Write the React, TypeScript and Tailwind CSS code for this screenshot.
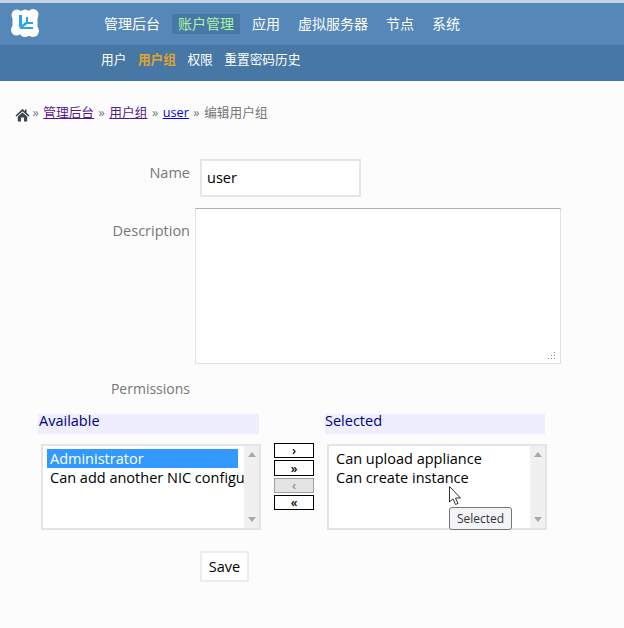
const cjk = "font-['Open_Sans','Noto_Sans_CJK_SC',sans-serif]";

function Logo() {
  return (
    <svg width="28" height="28" viewBox="0 0 28 28">
      <g fill="#ffffff">
        <circle cx="6" cy="6" r="5.5" />
        <circle cx="22" cy="5.5" r="5.5" />
        <circle cx="5.5" cy="21" r="5.5" />
        <circle cx="22" cy="22" r="6" />
        <circle cx="14" cy="6" r="5.5" />
        <circle cx="14" cy="22.5" r="5.5" />
        <rect x="1.5" y="5" width="25" height="18" />
      </g>
      <g fill="#2aa6e8">
        <rect x="8" y="6" width="3" height="12" />
        <rect x="15" y="8" width="2" height="7" />
        <rect x="15" y="13" width="7" height="2" />
        <rect x="9" y="18" width="13" height="2" />
      </g>
      <path d="M9 19L16 13.5" stroke="#2aa6e8" strokeWidth="2.5" />
    </svg>
  );
}

function Home() {
  return (
    <svg width="15" height="14" viewBox="0 0 15 14">
      <path d="M7.5 1L0.5 7.5L1.5 8.5L7.5 3.2L13.5 8.5L14.5 7.5L11.5 4.7V1.5H10V3.3z" fill="#333c42" />
      <path d="M2.8 8.6L7.5 4.5L12.2 8.6V13.5H9V9.5H6V13.5H2.8z" fill="#3d464c" />
    </svg>
  );
}

function Arrow({ up }: { up?: boolean }) {
  return (
    <svg width="8" height="5" viewBox="0 0 8 5">
      <path d={up ? "M4 0L8 5H0z" : "M0 0H8L4 5z"} fill="#a8a8a8" />
    </svg>
  );
}

function ListBox({ items, selected }: { items: string[]; selected?: string }) {
  return (
    <div className="flex h-[86px] w-[220px] border-2 border-[#e4e4e4] bg-white">
      <div className="min-w-0 flex-1 overflow-hidden pl-[4px] pt-[3px]">
        {items.map((t) => (
          <div
            key={t}
            className={
              "h-[19px] w-[191px] whitespace-nowrap pl-[3px] text-[14.5px] leading-[19px] " +
              (t === selected ? "bg-[#3399ff] text-white" : "text-black")
            }
          >
            {t}
          </div>
        ))}
      </div>
      <div className="flex w-[15px] shrink-0 flex-col items-center justify-between bg-[#f0f0f0] py-[6px]">
        <Arrow up />
        <Arrow />
      </div>
    </div>
  );
}

function Shuttle({ label, disabled, h }: { label: string; disabled?: boolean; h: string }) {
  return (
    <div
      className={
        "flex w-[40px] items-center justify-center border text-[12px] font-semibold leading-[11px] " +
        h +
        (disabled ? " border-[#a0a0a0] bg-[#e4e4e4] text-[#8a8a8a]" : " border-black bg-white text-black")
      }
    >
      {label}
    </div>
  );
}

export default function App() {
  return (
    <div className={"flex h-[628px] w-[624px] flex-col overflow-hidden bg-[#fcfcfc] " + cjk}>
      <header>
        <div className="h-[3px] bg-[#c3d3e4]" />
        <div className="flex h-[42px] items-center bg-[#5588b8] pl-[11px]">
          <div className="h-[28px] w-[28px] -translate-y-[1px]">
            <Logo />
          </div>
          <nav className="ml-[59px] flex gap-[6px] text-[14px] leading-[20px] text-white">
            <span className="px-[6px]">管理后台</span>
            <span className="bg-[#4878a5] px-[6px] text-[#aaf5a0]">账户管理</span>
            <span className="px-[6px]">应用</span>
            <span className="px-[6px]">虚拟服务器</span>
            <span className="px-[6px]">节点</span>
            <span className="px-[6px]">系统</span>
          </nav>
        </div>
        <div className="flex h-[36px] items-center gap-[11.5px] bg-[#4677a5] pb-[8px] pl-[101px] text-[12.7px] leading-[18px] text-white">
          <span>用户</span>
          <span className="font-bold text-[#e0a52c]">用户组</span>
          <span>权限</span>
          <span>重置密码历史</span>
        </div>
      </header>

      <main className="flex flex-col">
        <div className="ml-[15px] mt-[21px] flex h-[20px] items-center gap-[4.5px] text-[12.7px] leading-[20px] text-[#777777]">
          <span className="-mr-[2px] translate-y-[3px]">
            <Home />
          </span>
          <span>»</span>
          <a className="text-[#551a8b] underline">管理后台</a>
          <span>»</span>
          <a className="text-[#551a8b] underline">用户组</a>
          <span>»</span>
          <a className="text-[#0000ee] underline">user</a>
          <span>»</span>
          <span>编辑用户组</span>
        </div>

        <div className="mt-[37px] flex items-start">
          <label className="mt-[4px] w-[190px] text-right text-[14.5px] leading-[20px] text-[#777777]">Name</label>
          <div className="ml-[10px] flex h-[38px] w-[161px] items-center border-2 border-[#e6e6e6] bg-white pl-[5px] text-[14.5px] text-black">
            user
          </div>
        </div>

        <div className="mt-[11px] flex items-start">
          <label className="mt-[13px] w-[190px] text-right text-[14.5px] leading-[20px] text-[#777777]">Description</label>
          <div className="relative ml-[5px] h-[156px] w-[366px] border border-[#dfe1e8] border-t-[#b0b0b0] bg-white">
            <svg className="absolute bottom-[3px] right-[4px]" width="9" height="9" viewBox="0 0 9 9">
              <path d="M7 1h1v1H7zM7 4h1v1H7zM4 4h1v1H4zM7 7h1v1H7zM4 7h1v1H4zM1 7h1v1H1z" fill="#8c8c8c" />
            </svg>
          </div>
        </div>

        <div className="mt-[15px] w-[190px] text-right text-[14px] leading-[20px] text-[#777777]">Permissions</div>

        <div className="mt-[15px] flex items-start pl-[38px]">
          <div className="w-[221px]">
            <div className="h-[20px] bg-[#eeeefe] pl-[1px] text-[14.5px] leading-[14px] text-[#000080]">Available</div>
            <div className="ml-[3px] mt-[10px]">
              <ListBox items={["Administrator", "Can add another NIC configuration"]} selected="Administrator" />
            </div>
          </div>
          <div className="ml-[15px] mt-[29px] flex w-[40px] flex-col gap-[2px]">
            <Shuttle label="›" h="h-[15px]" />
            <Shuttle label="»" h="h-[16px]" />
            <Shuttle label="‹" disabled h="h-[15px]" />
            <Shuttle label="«" h="h-[15px]" />
          </div>
          <div className="relative ml-[11px] w-[220px]">
            <div className="h-[20px] bg-[#eeeefe] text-[14.5px] leading-[14px] text-[#000080]">Selected</div>
            <div className="ml-[2px] mt-[10px]">
              <ListBox items={["Can upload appliance", "Can create instance"]} />
            </div>
            <svg className="absolute left-[124px] top-[72px]" width="13" height="20" viewBox="0 0 13 20">
              <path d="M0.5 0.5V16L4 12.8L6.5 18.5L9 17.4L6.5 12H11.5z" fill="#ffffff" stroke="#333333" strokeWidth="1" />
            </svg>
            <div className="absolute left-[124px] top-[93px] flex h-[23px] w-[63px] items-center justify-center rounded-[3px] border border-[#767676] bg-[#f3f4f8] text-[12px] text-[#333333]">
              Selected
            </div>
          </div>
        </div>

        <div className="ml-[200px] mt-[21px] flex h-[31px] w-[49px] items-center justify-center border-2 border-[#ececec] bg-white text-[14.5px] text-black">
          Save
        </div>
      </main>
    </div>
  );
}
